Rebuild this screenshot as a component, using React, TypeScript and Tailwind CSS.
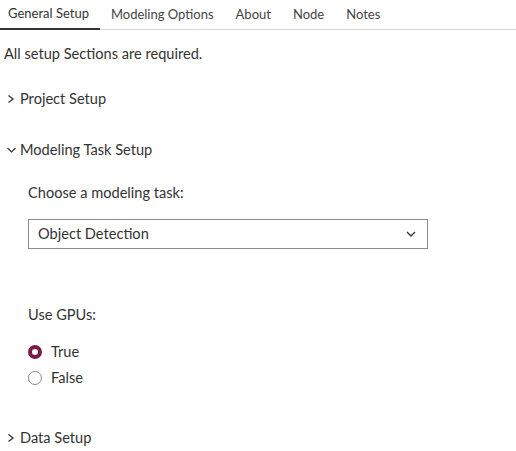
import React from 'react'

const TABS = ['General Setup', 'Modeling Options', 'About', 'Node', 'Notes']

function Chevron({ open }: { open?: boolean }) {
  return open ? (
    <svg width="12" height="10" viewBox="0 0 12 10" className="shrink-0">
      <path d="M1.5 3 L5.5 7 L9.5 3" fill="none" stroke="#333" strokeWidth="1.2" />
    </svg>
  ) : (
    <svg width="12" height="10" viewBox="0 0 12 10" className="shrink-0">
      <path d="M2.5 1.5 L7 5 L2.5 8.5" fill="none" stroke="#333" strokeWidth="1.3" />
    </svg>
  )
}

function Section({ title, open }: { title: string; open?: boolean }) {
  return (
    <div className="flex items-center gap-[2px] pl-[6px] h-5 text-[14.6px]">
      <Chevron open={open} />
      <span>{title}</span>
    </div>
  )
}

function Radio({ label, checked }: { label: string; checked?: boolean }) {
  return (
    <label className="flex items-center gap-[9px] h-5">
      {checked ? (
        <span className="w-[14px] h-[14px] rounded-full border-[4px] border-[#7a1c48] bg-white" />
      ) : (
        <span className="w-[14px] h-[14px] rounded-full border border-[#8a8a8a] bg-white" />
      )}
      <span>{label}</span>
    </label>
  )
}

export default function App() {
  return (
    <div className="w-[516px] h-[451px] bg-white text-[#333] overflow-hidden" style={{ fontFamily: 'Lato, "Open Sans", sans-serif' }}>
      <div className="flex h-[30px] border-b border-[#d4d4d4] text-[13px]">
        {TABS.map((t, i) => (
          <div
            key={t}
            className={
              i === 0
                ? 'flex items-center pl-2 pr-[11px] border-b-2 border-[#333] -mb-px'
                : 'flex items-center px-[11px] text-[#444]'
            }
          >
            {t}
          </div>
        ))}
      </div>

      <p className="mt-[14px] pl-1 h-5 leading-5 text-[14.6px]">All setup Sections are required.</p>

      <div className="mt-[25px]">
        <Section title="Project Setup" />
      </div>

      <div className="mt-[31px]">
        <Section title="Modeling Task Setup" open />
      </div>

      <div className="pl-[28px] text-[14.6px]">
        <p className="mt-[23px] h-5 leading-5">Choose a modeling task:</p>
        <div className="mt-4 w-[400px] h-[30px] border border-[#8c8c8c] flex items-center justify-between pl-[9px] pr-[11px]">
          <span>Object Detection</span>
          <svg width="10" height="8" viewBox="0 0 10 8">
            <path d="M1 2 L5 6 L9 2" fill="none" stroke="#333" strokeWidth="1.3" />
          </svg>
        </div>

        <p className="mt-[56px] h-5 leading-5">Use GPUs:</p>
        <div className="mt-[17px] flex flex-col gap-[6px]">
          <Radio label="True" checked />
          <Radio label="False" />
        </div>
      </div>

      <div className="mt-[40px]">
        <Section title="Data Setup" />
      </div>
    </div>
  )
}
